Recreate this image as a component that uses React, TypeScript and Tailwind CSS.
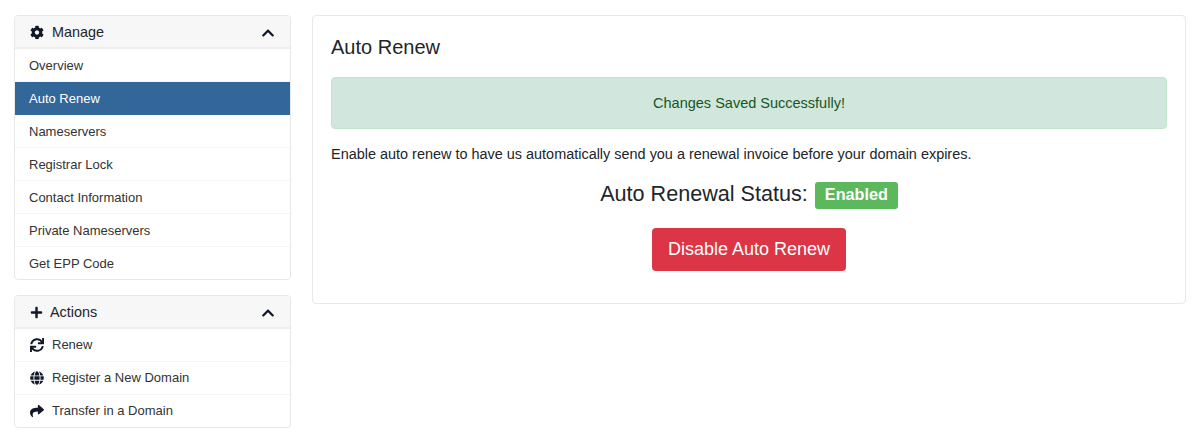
import { FaChevronUp, FaCog, FaGlobe, FaPlus, FaShare, FaSync } from "react-icons/fa";
import type { ReactNode } from "react";

const SideHeader = ({ icon, title }: { icon: ReactNode; title: string }) => (
  <div className="flex h-[33px] items-center border-b-2 border-[#eeeeee] bg-[#f7f7f7] px-[15px] pt-[2px] text-[14.4px] text-[#212529]">
    {icon}
    <span>{title}</span>
    <FaChevronUp className="ml-auto text-[14px] text-[#111827]" />
  </div>
);

const SideItem = ({ label, active }: { label: string; active?: boolean }) => (
  <a
    href="#"
    className={
      active
        ? "flex h-[33px] items-center bg-[#336699] pl-[14px] text-[13px] text-white"
        : "flex h-[33px] items-center border-b border-[#f5f5f5] pl-[14px] pt-[1px] text-[13px] text-[#333333] last:h-[32px] last:border-b-0"
    }
  >
    {label}
  </a>
);

const ActionItem = ({ label, icon }: { label: string; icon: ReactNode }) => (
  <a
    href="#"
    className="flex h-[33px] items-center border-b border-[#f5f5f5] pl-[15px] text-[13px] text-[#333333] last:h-[32px] last:border-b-0"
  >
    {icon}
    {label}
  </a>
);

export default function App() {
  return (
    <div className="flex h-[443px] items-start gap-[21px] bg-white pl-[14px] pr-[14px] pt-[15px] font-['Liberation_Sans',Arial,sans-serif]">
      <div className="flex w-[277px] shrink-0 flex-col gap-[15px]">
        <div className="overflow-hidden rounded border border-[#e8e8e8]">
          <SideHeader icon={<FaCog className="mr-[8px] w-[14px] text-[15px] text-[#111827]" />} title="Manage" />
          <SideItem label="Overview" />
          <SideItem label="Auto Renew" active />
          <SideItem label="Nameservers" />
          <SideItem label="Registrar Lock" />
          <SideItem label="Contact Information" />
          <SideItem label="Private Nameservers" />
          <SideItem label="Get EPP Code" />
        </div>
        <div className="overflow-hidden rounded border border-[#e8e8e8]">
          <SideHeader icon={<FaPlus className="mr-[7px] text-[13px] text-[#111827]" />} title="Actions" />
          <ActionItem label="Renew" icon={<FaSync className="mr-[8px] w-[14px] text-[14px] text-[#111827]" />} />
          <ActionItem label="Register a New Domain" icon={<FaGlobe className="mr-[8px] w-[14px] text-[14px] text-[#111827]" />} />
          <ActionItem label="Transfer in a Domain" icon={<FaShare className="mr-[8px] w-[14px] text-[14px] text-[#111827]" />} />
        </div>
      </div>
      <div className="h-[289px] flex-1 rounded border border-[#e8e8e8] px-[18px] pt-[18px]">
        <h3 className="text-[20px] leading-[26px] text-[#212529]">Auto Renew</h3>
        <div className="mt-[17px] flex h-[52px] items-center justify-center rounded border border-[#c3e6cb] bg-[#d1e7dd] pt-[1px] text-[14.5px] text-[#155724]">
          Changes Saved Successfully!
        </div>
        <p className="mt-[15px] text-[14.45px] leading-[21px] text-[#212529]">
          Enable auto renew to have us automatically send you a renewal invoice before your domain expires.
        </p>
        <div className="mt-[17px] flex items-center justify-center gap-[7px] text-[21.6px] leading-[26px] text-[#212529]">
          <span className="-mt-[3px]">Auto Renewal Status:</span>
          <span className="rounded-[3px] bg-[#5cb85c] px-[10px] pb-[5px] pt-[2px] text-[16.2px] font-bold leading-[20px] text-white">Enabled</span>
        </div>
        <div className="mt-[19px] flex justify-center">
          <button className="h-[43px] w-[194px] rounded bg-[#dc3545] text-[18px] text-white">Disable Auto Renew</button>
        </div>
      </div>
    </div>
  );
}
